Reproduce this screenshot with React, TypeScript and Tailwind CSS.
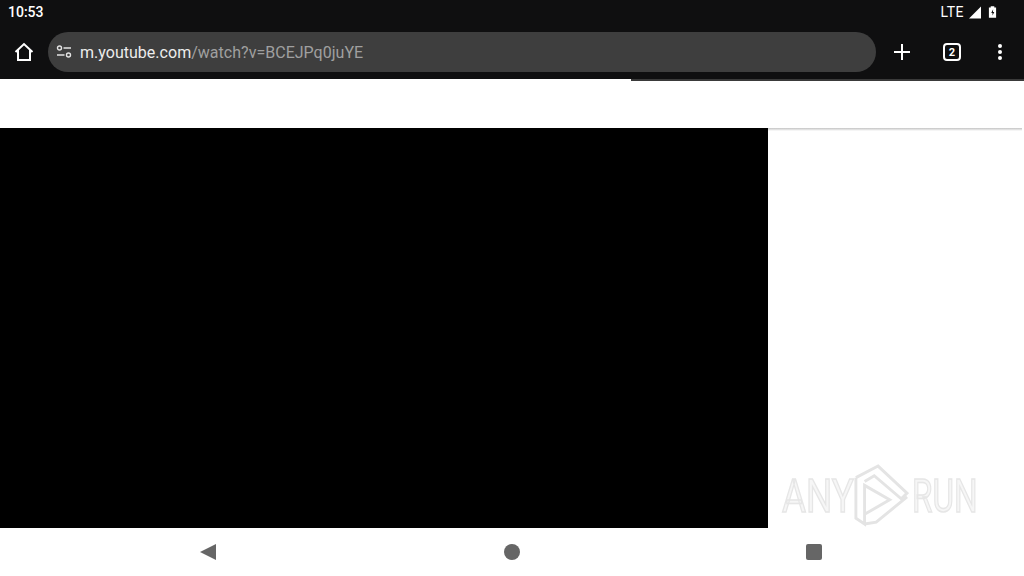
import React from "react";

function Logo() {
  return (
    <svg width="56" height="64" viewBox="0 0 58 66" fill="none" stroke="#e4e4e4" strokeWidth="3" className="blur-[0.7px] shrink-0">
      <path d="M3 14 L3 56 L12 62 L12 22 L38 37 L12 52" />
      <path d="M3 14 L26 2 L56 30 L50 36 L22 12 L12 18" />
      <path d="M12 62 L24 60 L56 34" />
    </svg>
  );
}

export default function App() {
  return (
    <div className="w-[1024px] h-[576px] overflow-hidden flex flex-col bg-white font-['Roboto',sans-serif]">
      <header className="h-[79px] bg-[#0f0f10] flex flex-col shrink-0">
        <div className="h-6 flex items-center justify-between pl-2 pr-[27px] text-white text-[14px] font-medium">
          <span>10:53</span>
          <div className="flex items-center gap-[4px]">
            <span className="font-normal text-[14px] tracking-[0.5px]">LTE</span>
            <svg width="13" height="13" viewBox="0 0 13 13"><path d="M13 0.5V12.5H1Z" fill="#fff" /></svg>
            <svg width="9" height="14" viewBox="0 0 10 14" className="ml-[3px]">
              <path d="M3 0.5H7V2H9V13.5H1V2H3Z" fill="#fff" />
              <path d="M5.7 4L3.6 8H5V11L7 7H5.5Z" fill="#0f0f10" />
            </svg>
          </div>
        </div>
        <div className="h-12 flex items-center">
          <div className="w-12 h-10 mt-2 flex items-center justify-center">
            <svg width="20" height="20" viewBox="0 0 20 20" fill="none" stroke="#fff" strokeWidth="2" strokeLinejoin="miter">
              <path d="M1.5 10 L10 2 L18.5 10 M4 8 V18 H16 V8" />
            </svg>
          </div>
          <div className="w-[828px] h-10 mt-2 rounded-full bg-[#3e3e3e] flex items-center pl-[8px]">
            <svg width="16" height="14" viewBox="0 0 16 14" fill="none" stroke="#e4e4e4" strokeWidth="1.4">
              <circle cx="3.5" cy="3" r="2" />
              <path d="M7.5 3 H15 M1 10 H8.5" />
              <circle cx="12.5" cy="10" r="2" />
            </svg>
            <span className="ml-[8px] mt-[2px] text-[16px] tracking-[0.02px] text-[#ececec] whitespace-nowrap">
              m.youtube.com<span className="text-[#a0a0a0]">/watch?v=BCEJPq0juYE</span>
            </span>
          </div>
          <div className="flex-1 h-10 mt-2 flex items-center pl-[17px]">
            <svg width="18" height="18" viewBox="0 0 18 18" stroke="#fff" strokeWidth="2" className="shrink-0"><path d="M9 1V17M1 9H17" /></svg>
            <div className="ml-[32px] w-[18px] h-[18px] rounded-[4px] border-2 border-white flex items-center justify-center text-white text-[11px] font-bold leading-none shrink-0">2</div>
            <svg width="4" height="16" viewBox="0 0 4 16" fill="#fff" className="ml-[37px] shrink-0">
              <circle cx="2" cy="2" r="2" />
              <circle cx="2" cy="8" r="2" />
              <circle cx="2" cy="14" r="2" />
            </svg>
          </div>
        </div>
      </header>
      <div className="relative flex-1 flex flex-col min-h-0">
        <div className="absolute top-0 left-[631px] right-0 h-[2px] bg-[#3a3a3a]" />
        <div className="h-[49px] shrink-0 bg-white" />
        <div className="flex-1 flex min-h-0">
          <div className="w-[768px] bg-black" />
          <div className="relative flex-1 bg-white">
            <div className="h-[3px] mr-[2px] bg-gradient-to-b from-[#c4c4c4] to-white" />
            <div className="absolute left-[14px] top-[336px] flex items-center text-[46px] leading-none text-[#f6f6f6] font-normal [-webkit-text-stroke:1.5px_#e6e6e6] blur-[0.6px]">
              <span className="scale-x-[0.8] origin-left w-[71px] whitespace-nowrap">ANY</span>
              <Logo />
              <span className="scale-x-[0.72] origin-left ml-[3px] w-[62px] whitespace-nowrap">RUN</span>
            </div>
          </div>
        </div>
        <nav className="h-12 shrink-0 bg-white flex items-center">
          <svg width="16" height="16" viewBox="0 0 16 16" className="ml-[200px] shrink-0"><path d="M0 8 L16 0 V16Z" fill="#666" /></svg>
          <div className="w-[16px] h-[16px] ml-[288px] rounded-full bg-[#666] shrink-0" />
          <div className="w-[16px] h-[16px] ml-[286px] rounded-[2px] bg-[#666] shrink-0" />
        </nav>
      </div>
    </div>
  );
}
